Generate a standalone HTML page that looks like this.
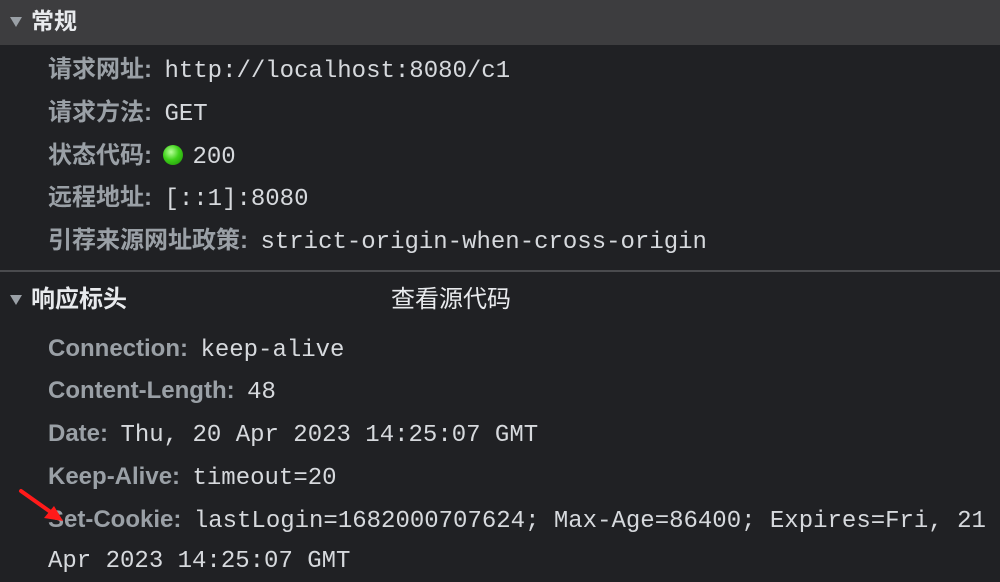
<!DOCTYPE html>
<html><head><meta charset="utf-8"><style>
body{margin:0;width:1000px;height:582px;background:#202124;overflow:hidden;position:relative;font-family:"Liberation Sans","Noto Sans CJK SC",sans-serif}
.hdr{position:absolute;left:0;top:0;width:1000px;height:45px;background:#3d3d3f}
.t{position:absolute;white-space:nowrap;line-height:1}
.h{font-size:23px;font-weight:bold;color:#e8eaed}
.row{position:absolute;left:48px;white-space:nowrap;line-height:1;height:24px}
.k{font-size:24px;font-weight:bold;color:#9aa0a6;margin-right:8px}
.v{font-family:"Liberation Mono","Noto Sans CJK SC",monospace;font-size:24px;color:#d6d9dd}
.tri{position:absolute;width:0;height:0;border-left:6px solid transparent;border-right:6px solid transparent;border-top:10px solid #9aa0a6}
</style></head><body>
<div class="hdr"></div>
<div class="tri" style="left:10px;top:17px"></div>
<div class="t h" style="left:31px;top:10px">常规</div>
<div class="row" style="top:58px"><span class="k">请求网址:</span> <span class="v">http://localhost:8080/c1</span></div>
<div class="row" style="top:101px"><span class="k">请求方法:</span> <span class="v">GET</span></div>
<div class="row" style="top:144px"><span class="k">状态代码:</span><span style="display:inline-block;width:20px;height:20px;border-radius:50%;background:radial-gradient(circle at 40% 35%,#b8ff9a,#3fd21a 45%,#1c8a07);vertical-align:-2px;margin-left:3px;margin-right:5px"></span> <span class="v">200</span></div>
<div class="row" style="top:186px"><span class="k">远程地址:</span> <span class="v">[::1]:8080</span></div>
<div class="row" style="top:229px"><span class="k">引荐来源网址政策:</span> <span class="v">strict-origin-when-cross-origin</span></div>
<div style="position:absolute;left:0;top:270px;width:1000px;height:2px;background:#4a4b4e"></div>
<div class="tri" style="left:10px;top:295px"></div>
<div class="t h" style="left:31px;top:288px;font-size:24px">响应标头</div>
<div class="t" style="left:391px;top:288px;font-size:24px;color:#e8eaed">查看源代码</div>
<div class="row" style="top:337px"><span class="k">Connection:</span> <span class="v">keep-alive</span></div>
<div class="row" style="top:379px"><span class="k">Content-Length:</span> <span class="v">48</span></div>
<div class="row" style="top:422px"><span class="k">Date:</span> <span class="v">Thu, 20 Apr 2023 14:25:07 GMT</span></div>
<div class="row" style="top:465px"><span class="k">Keep-Alive:</span> <span class="v">timeout=20</span></div>
<div class="row" style="top:508px"><span class="k">Set-Cookie:</span> <span class="v">lastLogin=1682000707624; Max-Age=86400; Expires=Fri, 21</span></div>
<div class="row" style="top:550px"><span class="v">Apr 2023 14:25:07 GMT</span></div>
<svg style="position:absolute;left:0;top:480px" width="80" height="50"><line x1="21" y1="11" x2="52" y2="33" stroke="#ff1a1a" stroke-width="4" stroke-linecap="round"/><polygon points="63,41 44,38 54,26" fill="#ff1a1a"/></svg>
</body></html>
